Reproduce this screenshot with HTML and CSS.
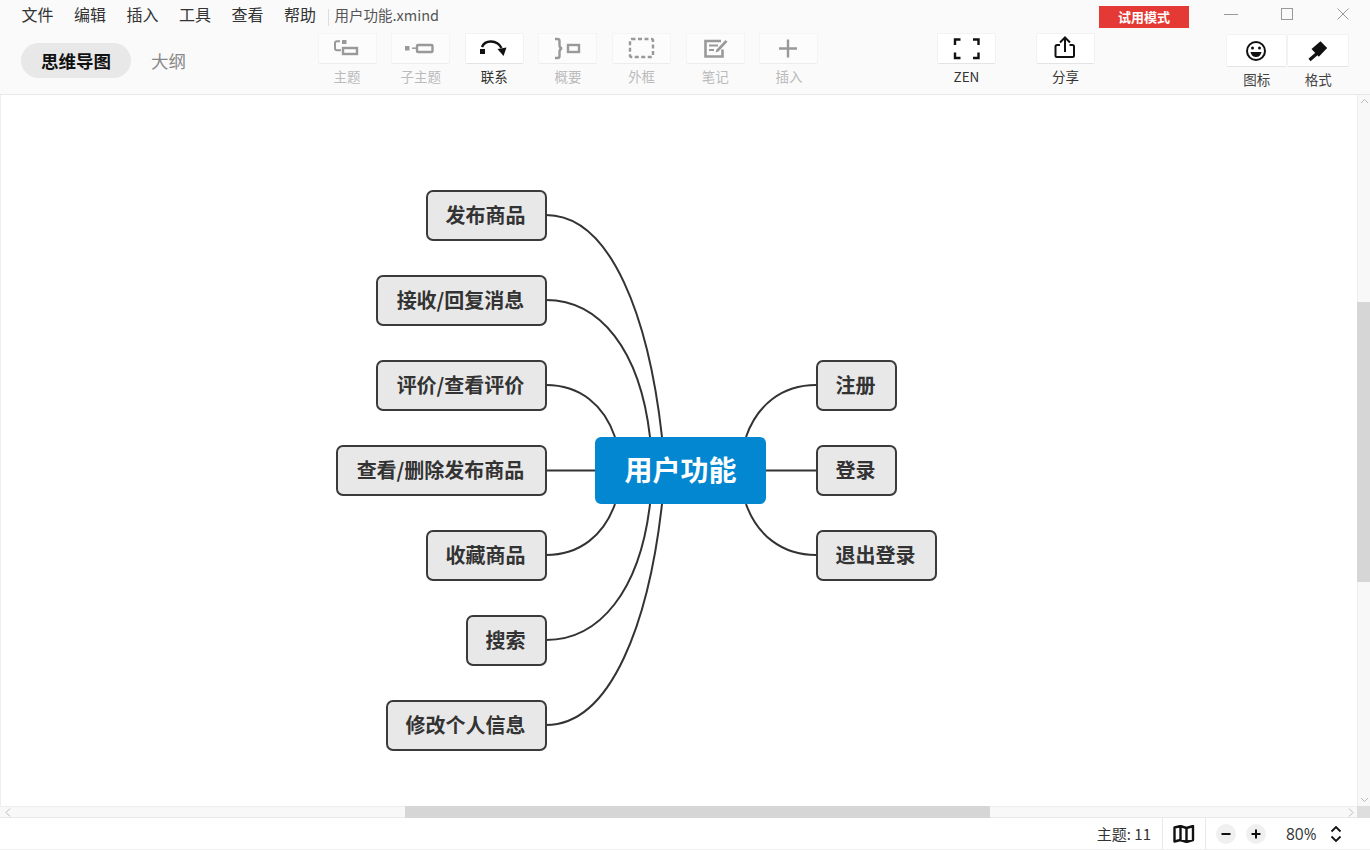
FILE: index.html
```html
<!DOCTYPE html>
<html lang="zh-CN">
<head>
<meta charset="utf-8">
<title>用户功能.xmind</title>
<link rel="stylesheet" href="styles.css">
</head>
<body>
<div class="app">
  <header class="header">
    <div class="titlebar">
      <nav class="menu"><span>文件</span><span>编辑</span><span>插入</span><span>工具</span><span>查看</span><span>帮助</span></nav>
      <span class="filename">用户功能.xmind</span>
      <span class="trial">试用模式</span>
      <div class="winctl">
        <svg width="14" height="14" viewBox="0 0 14 14"><path d="M0 7.500h14" stroke="#999" fill="none"/></svg>
        <svg width="14" height="14" viewBox="0 0 14 14"><rect x="1.500" y="1.500" width="11" height="11" stroke="#999" fill="none"/></svg>
        <svg width="14" height="14" viewBox="0 0 14 14"><path d="M1.500 1.500l11 11M12.500 1.500l-11 11" stroke="#999" fill="none"/></svg>
      </div>
    </div>
    <div class="toolbar">
      <div class="tabs"><span class="tab active">思维导图</span><span class="tab">大纲</span></div>
      <div class="tools">
        <div class="tool off"><div class="btn"><svg width="59" height="31" viewBox="0 0 59 31"><rect x="24" y="7" width="4.500" height="4" fill="#999"/><path d="M22 8.200h-3q-2 0-2 2v5q0 2 2 2h4" fill="none" stroke="#999" stroke-width="2"/><rect x="25" y="15" width="14" height="6" fill="none" stroke="#999" stroke-width="2.400"/></svg></div><span>主题</span></div>
        <div class="tool off"><div class="btn"><svg width="59" height="31" viewBox="0 0 59 31"><rect x="14" y="13" width="4.500" height="4.500" fill="#999"/><path d="M21 15.200h4" stroke="#999" stroke-width="1.500"/><rect x="26" y="12" width="15.500" height="7" rx="1" fill="none" stroke="#999" stroke-width="2.400"/></svg></div><span>子主题</span></div>
        <div class="tool on"><div class="btn"><svg width="59" height="31" viewBox="0 0 59 31"><rect x="15" y="16" width="5" height="5" fill="#111"/><path d="M17 14C20 6.500 32 6.500 36.500 15" fill="none" stroke="#111" stroke-width="2.400"/><path d="M32.500 16l9-1.500-3 8.500z" fill="#111"/></svg></div><span>联系</span></div>
        <div class="tool off"><div class="btn"><svg width="59" height="31" viewBox="0 0 59 31"><path d="M17 6h2.500q2 0 2 2v4q0 3 2.500 3.500-2.500.5-2.500 3.500v4q0 2-2 2H17" fill="none" stroke="#999" stroke-width="2.400"/><rect x="30" y="12" width="11" height="7" fill="none" stroke="#999" stroke-width="2.400"/></svg></div><span>概要</span></div>
        <div class="tool off"><div class="btn"><svg width="59" height="31" viewBox="0 0 59 31"><rect x="18" y="6" width="23" height="18" rx="1.500" fill="none" stroke="#999" stroke-width="2.400" stroke-dasharray="4 2.500"/></svg></div><span>外框</span></div>
        <div class="tool off"><div class="btn"><svg width="59" height="31" viewBox="0 0 59 31"><path d="M36.500 16.500V23.500H19.500V8H35" fill="none" stroke="#999" stroke-width="2.600"/><path d="M23 12.500h9M23 17h5" stroke="#999" stroke-width="2"/><path d="M30.500 16.500L39.500 7l2 1.800-9 9.700-3 1z" fill="#999"/></svg></div><span>笔记</span></div>
        <div class="tool off"><div class="btn"><svg width="59" height="31" viewBox="0 0 59 31"><path d="M20 15.500h18M29 6.500v18" stroke="#999" stroke-width="2.400"/></svg></div><span>插入</span></div>
      </div>
      <div class="tool on zen"><div class="btn"><svg width="59" height="31" viewBox="0 0 59 31"><path d="M18 12V6.500h5.500M36 6.500h5.500V12M41.500 19.500V25H36M23.500 25H18v-5.500" fill="none" stroke="#111" stroke-width="2.400"/></svg></div><span>ZEN</span></div>
      <div class="tool on share"><div class="btn"><svg width="59" height="31" viewBox="0 0 59 31"><path d="M24 12h-3q-1.500 0-1.500 1.500v9q0 1.500 1.500 1.500h15.500q1.500 0 1.500-1.500v-9q0-1.500-1.500-1.500h-3" fill="none" stroke="#111" stroke-width="2"/><path d="M29 19V5M24 9.500L29 4.500l5 5" fill="none" stroke="#111" stroke-width="2"/></svg></div><span>分享</span></div>
      <div class="panel">
        <div class="panelbtn"><div class="btn"><svg width="61" height="33" viewBox="0 0 61 33"><circle cx="30" cy="17" r="9" fill="none" stroke="#111" stroke-width="2"/><circle cx="26.500" cy="14" r="1.500" fill="#111"/><circle cx="33.500" cy="14" r="1.500" fill="#111"/><path d="M24.500 18h11q-1 5-5.500 5t-5.500-5z" fill="#111"/></svg></div><span>图标</span></div>
        <div class="panelbtn"><div class="btn"><svg width="61" height="33" viewBox="0 0 61 33"><path d="M33.500 7.300L40.200 14l-8.400 8.700L24.500 15z" fill="#111"/><path d="M30 19.500L22.500 26" stroke="#111" stroke-width="3.200"/></svg></div><span>格式</span></div>
      </div>
    </div>
  </header>

  <main class="workspace">
    <div class="canvas">
      <svg class="links" width="1356" height="711" viewBox="0 95 1356 711">
        <g fill="none" stroke="#333" stroke-width="2">
          <path d="M546 215C612 215 649 320 662 437"/>
          <path d="M546 300C600 300 640 350 650 437"/>
          <path d="M546 385C580 385 604 405 615 437"/>
          <path d="M546 470.500H595"/>
          <path d="M546 555C580 555 604 535 615 504"/>
          <path d="M546 640C600 640 640 590 650 504"/>
          <path d="M546 725C612 725 649 620 662 504"/>
          <path d="M816 385C782 385 757 405 746 437"/>
          <path d="M766 470.500H816"/>
          <path d="M816 555C782 555 757 535 746 504"/>
        </g>
      </svg>
      <div class="node n1">发布商品</div>
      <div class="node n2">接收/回复消息</div>
      <div class="node n3">评价/查看评价</div>
      <div class="node n4">查看/删除发布商品</div>
      <div class="node n5">收藏商品</div>
      <div class="node n6">搜索</div>
      <div class="node n7">修改个人信息</div>
      <div class="node n8">注册</div>
      <div class="node n9">登录</div>
      <div class="node n10">退出登录</div>
      <div class="root">用户功能</div>
    </div>
    <div class="vscroll">
      <svg width="13" height="12" viewBox="0 0 13 12"><path d="M3 8l3.500-3.500L10 8" fill="none" stroke="#bbb"/></svg>
      <div class="vthumb"></div>
      <svg width="13" height="12" viewBox="0 0 13 12"><path d="M3 4l3.500 3.500L10 4" fill="none" stroke="#bbb"/></svg>
    </div>
    <div class="hscroll">
      <svg width="12" height="11" viewBox="0 0 12 11"><path d="M9 1.500L5 5.500l4 4" fill="none" stroke="#bbb"/></svg>
      <div class="hthumb"></div>
      <svg width="12" height="11" viewBox="0 0 12 11"><path d="M4 1.500l4 4-4 4" fill="none" stroke="#bbb"/></svg>
    </div>
    <div class="corner"></div>
  </main>

  <footer class="status">
    <span class="count">主题: 11</span>
    <div class="mapcell"><svg width="22" height="18" viewBox="0 0 22 18"><path d="M1.500 2.500L7.500 1l6 2 6.500-2v14l-6.500 2-6-2-6 1.500zM7.500 1v14M13.500 3v14" fill="none" stroke="#111" stroke-width="2.400" stroke-linejoin="round"/></svg></div>
    <div class="zoomcell">
      <span class="round"><svg width="20" height="20" viewBox="0 0 20 20"><path d="M5.500 10h9" stroke="#111" stroke-width="2"/></svg></span>
      <span class="round"><svg width="20" height="20" viewBox="0 0 20 20"><path d="M5.500 10h9M10 5.500v9" stroke="#111" stroke-width="2"/></svg></span>
      <span class="pct">80%</span>
      <svg width="12" height="18" viewBox="0 0 12 18"><path d="M1.500 6.500L6 2l4.500 4.500M1.500 11.500L6 16l4.500-4.500" fill="none" stroke="#111" stroke-width="1.800"/></svg>
    </div>
  </footer>
</div>
</body>
</html>
```

FILE: styles.css
```css
* { box-sizing: border-box; }
html, body { margin: 0; height: 100%; overflow: hidden; }
body { font-family: "Noto Sans CJK SC", "Open Sans", sans-serif; color: #333; background: #fff; }
svg { display: block; flex: none; }
.app { display: flex; flex-direction: column; width: 1370px; height: 850px; }

.header { height: 95px; flex: none; background: #fafafa; border-bottom: 1px solid #e8e8e8; }
.titlebar { height: 33px; display: flex; align-items: flex-start; padding-right: 20px; }
.menu { display: flex; gap: 20.500px; margin-left: 21.500px; padding-top: 3px; padding-right: 11.500px; font-size: 16px; line-height: 22px; color: #333; }
.filename { height: 17px; margin-top: 9px; padding-left: 6px; border-left: 1px solid #ddd; font-size: 14.500px; line-height: 11px; color: #555; }
.trial { margin-left: auto; margin-top: 6px; width: 90px; height: 22px; background: #e53935; color: #fff; font-size: 13px; font-weight: 700; line-height: 22px; text-align: center; }
.winctl { display: flex; gap: 42px; margin-left: 35px; margin-top: 7px; }

.toolbar { display: flex; align-items: flex-start; padding-left: 21px; }
.tabs { display: flex; align-items: center; margin-top: 10px; width: 166px; }
.tab { font-size: 17.500px; line-height: 35px; color: #888; margin-left: 20px; }
.tab.active { width: 110px; margin-left: 0; height: 35px; border-radius: 18px; background: #e8e8e8; color: #111; font-weight: 700; text-align: center; }
.tools { display: flex; gap: 14.670px; margin-left: 130.500px; }
.tool { width: 59px; display: flex; flex-direction: column; align-items: center; font-size: 13.500px; line-height: 19px; }
.btn { background: #fff; border: 1px solid #f2f2f2; border-bottom-color: #e4e4e4; border-radius: 2px; }
.tool .btn { width: 59px; height: 31px; }
.btn svg { margin: -1px; }
.tool span { margin-top: 3px; }
.off { color: #bbb; }
.off .btn { background: #fcfcfc; border-color: #f4f4f4; border-bottom-color: #ececec; }
.on { color: #333; }
.zen { margin-left: 118.500px; }
.share { margin-left: 40px; }
.panel { display: flex; margin-left: 131px; margin-top: 1px; }
.panelbtn { width: 61.500px; display: flex; flex-direction: column; align-items: center; font-size: 13.500px; line-height: 19px; }
.panelbtn .btn { width: 61.500px; height: 33px; }
.panelbtn span { margin-top: 3px; color: #444; }

.workspace { flex: 1; display: grid; grid-template-columns: 1fr 13px; grid-template-rows: 1fr 12px; min-height: 0; }
.canvas { position: relative; overflow: hidden; border-left: 1px solid #eee; background: #fff; }
.links { position: absolute; left: -1px; top: 0; }
.node, .root { position: absolute; display: flex; align-items: center; justify-content: center; font-weight: 700; }
.node { height: 51px; padding: 0 2px 3px 0; background: #e8e8e8; border: 2px solid #3a3a3a; border-radius: 7px; font-size: 20px; color: #333; }
.root { left: 594px; top: 342px; width: 171px; height: 67px; padding-bottom: 4px; background: #0487d1; border-radius: 6px; color: #fff; font-size: 28px; }
.n1 { left: 425px; top: 95px; width: 121px; }
.n2 { left: 375px; top: 180px; width: 171px; }
.n3 { left: 375px; top: 265px; width: 171px; }
.n4 { left: 335px; top: 350px; width: 211px; }
.n5 { left: 425px; top: 435px; width: 121px; }
.n6 { left: 465px; top: 520px; width: 81px; }
.n7 { left: 385px; top: 605px; width: 161px; }
.n8 { left: 815px; top: 265px; width: 81px; }
.n9 { left: 815px; top: 350px; width: 81px; }
.n10 { left: 815px; top: 435px; width: 121px; }

.vscroll { display: flex; flex-direction: column; background: #f8f8f8; border-left: 1px solid #eee; }
.vscroll svg:last-child { margin-top: auto; }
.vthumb { height: 280px; margin-top: 195px; background: #d6d6d6; margin-left: -1px; }
.hscroll { display: flex; align-items: center; height: 12px; padding-left: 1px; background: #f8f8f8; border-top: 1px solid #eee; border-bottom: 1px solid #e8e8e8; }
.hscroll svg:last-child { margin-left: auto; }
.hthumb { width: 585px; height: 12px; margin-left: 392px; background: #d6d6d6; }
.corner { background: #dedede; }

.status { height: 32px; flex: none; display: flex; align-items: center; justify-content: flex-end; font-size: 15px; color: #333; border-bottom: 1px solid #eee; }
.count { margin-right: 11px; }
.mapcell { width: 44px; height: 31px; display: flex; align-items: center; justify-content: center; border-left: 1px solid #e8e8e8; border-right: 1px solid #e8e8e8; }
.zoomcell { display: flex; align-items: center; gap: 10px; width: 164px; padding-left: 10px; }
.round { width: 20px; height: 20px; border-radius: 50%; background: #f0f0f0; }
.pct { width: 30px; margin-left: 10px; margin-right: 4px; font-family: "Open Sans", sans-serif; font-size: 15.500px; }
```
